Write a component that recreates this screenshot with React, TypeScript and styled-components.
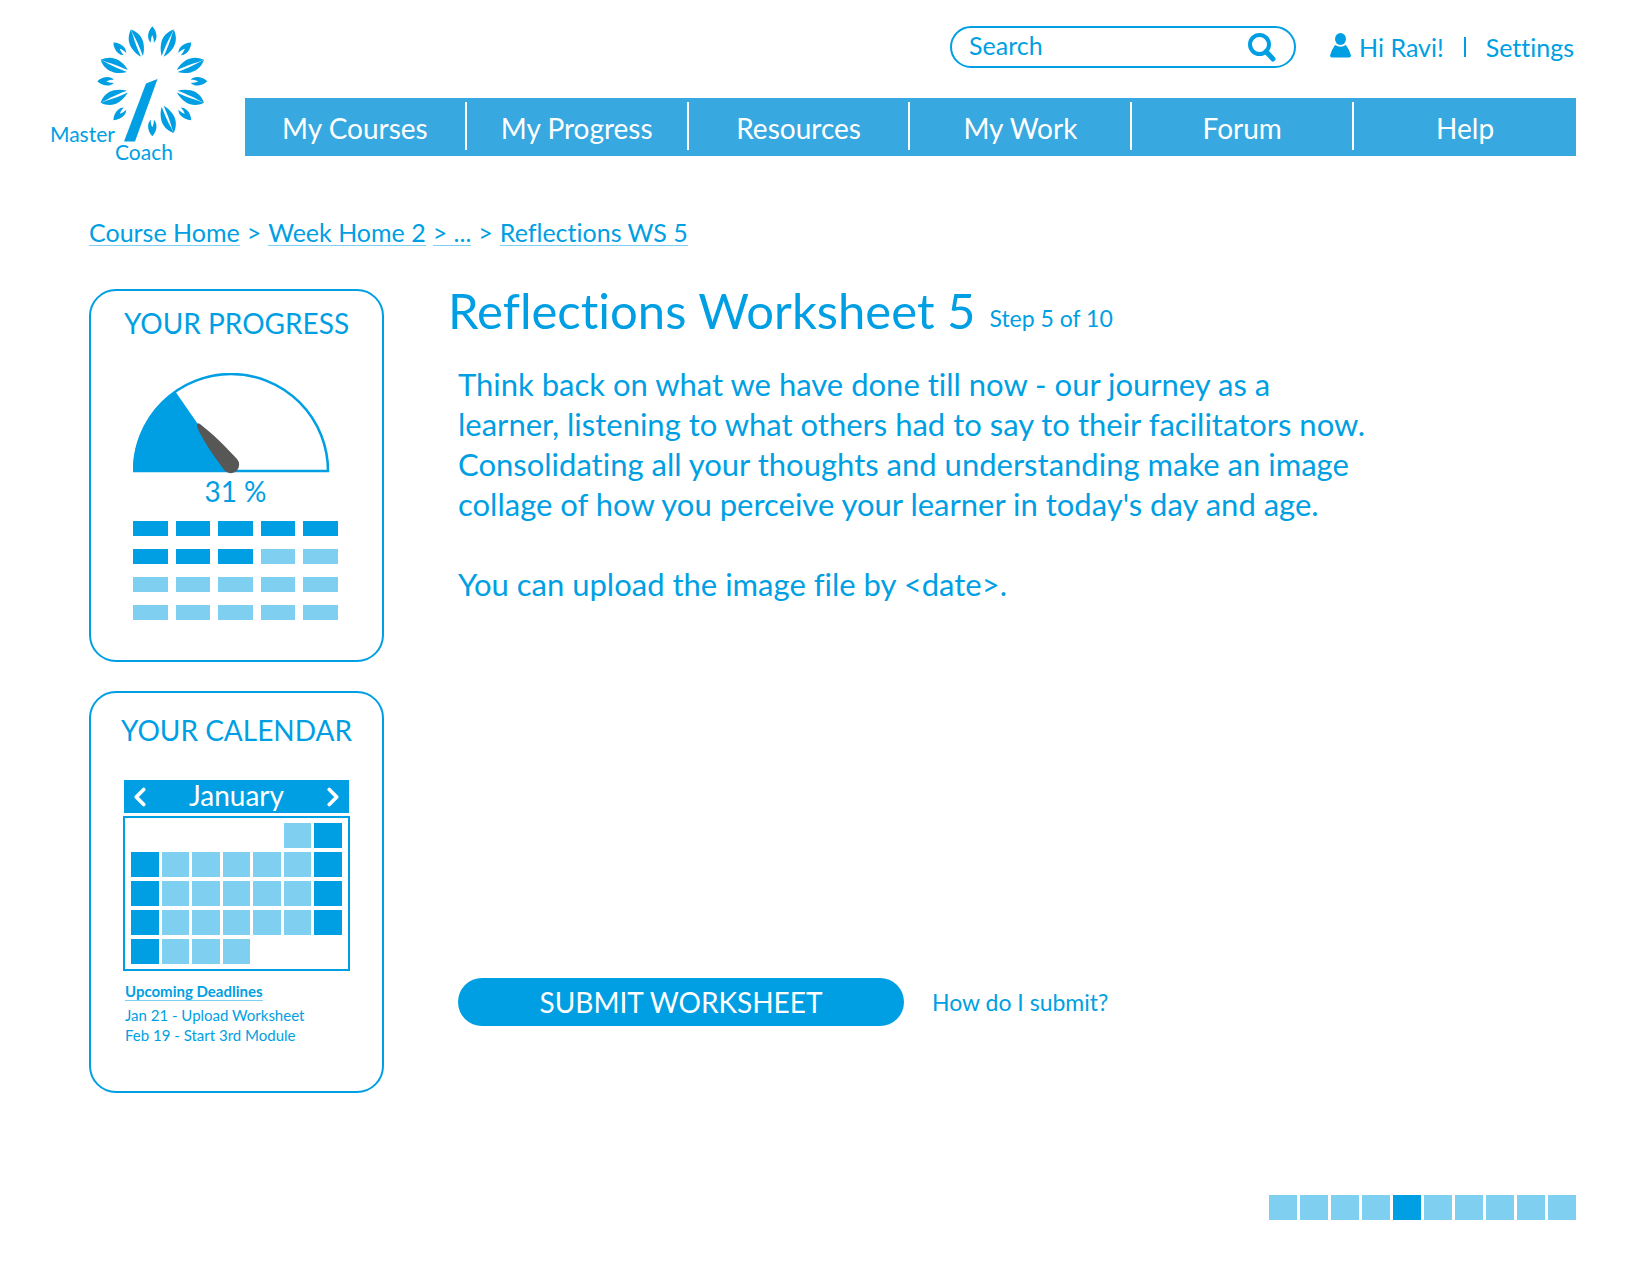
import React from "react";
import styled, { createGlobalStyle } from "styled-components";
import { ChevronLeft, ChevronRight } from "lucide-react";

const blue = "#009fe3";
const pale = "#7fcff0";
const navBlue = "#38a8e0";

const GlobalStyle = createGlobalStyle`
  * { box-sizing: border-box; }
  body {
    margin: 0;
    background: #fff;
    color: ${blue};
    font-family: Lato, "Noto Sans", sans-serif;
    font-variant-ligatures: none;
  }
  h1, h2, h3, p, ul, ol { margin: 0; padding: 0; font-weight: 400; }
  ul, ol { list-style: none; }
  a { color: inherit; text-decoration: none; }
  button, input { font: inherit; color: inherit; }
  button { border: 0; padding: 0; background: none; cursor: pointer; }
`;

const Page = styled.div`
  padding: 24px 74px 56px 48px;
`;

const Header = styled.header`
  display: flex;
  align-items: flex-start;
  gap: 37px;
`;

const LogoLink = styled.a`
  flex: none;
  display: block;
  svg { display: block; }
  text { font-size: 21px; fill: ${blue}; }
`;

const HeaderMain = styled.div`
  flex: 1;
  padding-top: 2px;
`;

const Toolbar = styled.div`
  display: flex;
  justify-content: flex-end;
  align-items: center;
  gap: 34px;
  margin-bottom: 30px;
  padding-right: 2px;
`;

const SearchForm = styled.form`
  display: flex;
  align-items: center;
  width: 346px;
  height: 42px;
  padding: 0 17px;
  border: 2px solid ${blue};
  border-radius: 21px;
`;

const SearchInput = styled.input`
  flex: 1;
  min-width: 0;
  padding: 0 0 4px;
  border: 0;
  outline: 0;
  background: none;
  font-size: 25px;
  &::placeholder { color: ${blue}; opacity: 1; }
`;

const IconButton = styled.button`
  display: flex;
`;

const Account = styled.div`
  display: flex;
  align-items: center;
  gap: 20px;
  font-size: 25px;
  line-height: 40px;
`;

const UserName = styled.a`
  display: flex;
  align-items: center;
  gap: 8px;
`;

const Divider = styled.span`
  width: 2px;
  height: 20px;
  background: ${blue};
`;

const Nav = styled.nav`
  display: grid;
  grid-template-columns: repeat(6, 1fr);
  height: 58px;
  padding: 4px 0 6px;
  background: ${navBlue};
`;

const NavItem = styled.a`
  display: flex;
  align-items: center;
  justify-content: center;
  padding-top: 4px;
  color: #fff;
  font-size: 28px;
  &:not(:last-child) { border-right: 2px solid #fff; }
`;

const Content = styled.div`
  padding-left: 41px;
`;

const Breadcrumb = styled.nav`
  display: flex;
  gap: 7px;
  margin-top: 55px;
  font-size: 25px;
  line-height: 26px;
`;

const Crumb = styled.a`
  border-bottom: 1px solid ${pale};
`;

const Columns = styled.div`
  display: grid;
  grid-template-columns: 295px 1fr;
  gap: 60px;
  margin-top: 43px;
`;

const Sidebar = styled.aside`
  display: flex;
  flex-direction: column;
  gap: 29px;
`;

const Card = styled.section<{ $top: number; $bottom: number }>`
  padding: ${(p) => p.$top}px 32px ${(p) => p.$bottom}px;
  border: 2px solid ${blue};
  border-radius: 27px;
`;

const CardTitle = styled.h2`
  margin: 0 -10px;
  font-size: 28px;
  line-height: 40px;
  text-align: center;
  white-space: nowrap;
`;

const Gauge = styled.figure`
  margin: 30px 12px 0 10px;
  text-align: center;
  svg { display: block; }
  figcaption { font-size: 28px; line-height: 34px; }
`;

const ModuleGrid = styled.div`
  display: grid;
  grid-template-columns: repeat(5, 1fr);
  gap: 13px 8px;
  margin: 13px 12px 0 10px;
`;

const Module = styled.span<{ $on: boolean }>`
  height: 15px;
  background: ${(p) => (p.$on ? blue : pale)};
`;

const MonthBar = styled.div`
  display: flex;
  align-items: center;
  justify-content: space-between;
  height: 33px;
  margin: 30px 1px 3px;
  padding: 0 1px;
  background: ${blue};
  color: #fff;
  h3 { font-size: 28px; line-height: 30px; padding-bottom: 3px; }
`;

const Calendar = styled.div`
  display: grid;
  grid-template-columns: repeat(7, 1fr);
  gap: 4px 3px;
  padding: 5px 6px;
  border: 2px solid ${blue};
`;

const Day = styled.span<{ $kind: string }>`
  height: 25px;
  background: ${(p) => (p.$kind === "#" ? blue : p.$kind === "+" ? pale : "transparent")};
`;

const Deadlines = styled.div`
  margin: 11px 2px 0;
  font-size: 15px;
  line-height: 20px;
  white-space: nowrap;
  h3 {
    display: table;
    margin-bottom: 4px;
    border-bottom: 1px solid ${pale};
    font-size: 15px;
    font-weight: 700;
    line-height: 18px;
  }
`;

const Main = styled.main`
  display: flex;
  flex-direction: column;
  padding-bottom: 67px;
`;

const TitleRow = styled.div`
  display: flex;
  align-items: flex-end;
  gap: 14px;
  margin-top: -9px;
  padding-left: 4px;
  h1 { font-size: 49px; line-height: 60px; }
`;

const Step = styled.span`
  font-size: 23px;
  line-height: 44px;
`;

const Brief = styled.div`
  display: grid;
  gap: 40px;
  margin-top: 24px;
  padding-left: 14px;
  font-size: 31px;
  line-height: 40px;
`;

const Actions = styled.div`
  display: flex;
  align-items: center;
  gap: 28px;
  margin-top: auto;
  padding-left: 14px;
`;

const SubmitButton = styled.button`
  width: 446px;
  height: 48px;
  border-radius: 24px;
  background: ${blue};
  color: #fff;
  font-size: 28px;
`;

const HelpLink = styled.a`
  font-size: 23px;
`;

const Steps = styled.ol`
  display: flex;
  justify-content: flex-end;
  gap: 3px;
  margin-top: 102px;
`;

const StepBox = styled.li<{ $current: boolean }>`
  width: 28px;
  height: 25px;
  background: ${(p) => (p.$current ? blue : pale)};
`;

const eighths = [0, 45, 90, 135, 180, 225, 270, 315];

function Logo() {
  return (
    <svg width="160" height="140" viewBox="48 24 160 140" role="img" aria-label="Master Coach">
      <g transform="translate(152.300 81.300)" fill={blue}>
        {eighths.map((a) => (
          <path
            key={a}
            transform={`rotate(${a})`}
            d="M0 -55 C3 -52 4.200 -48 4.200 -45 C4.200 -42 3 -40 1.600 -38.500 C1.600 -42 1 -44 0 -46 C-1 -44 -1.600 -42 -1.600 -38.500 C-3 -40 -4.200 -42 -4.200 -45 C-4.200 -48 -3 -52 0 -55Z"
          />
        ))}
        {eighths
          .filter((a) => a !== 180)
          .map((a) => (
            <g key={a} transform={`rotate(${a + 22.5})`}>
              <path d="M0 -56 C5.500 -51 7.500 -45 6.500 -39 C5.500 -34 3.500 -30 1 -27 C1.400 -35 1.200 -43 0.300 -50Z" />
              <path d="M0 -56 C-5.500 -51 -7.500 -45 -6.500 -39 C-5.500 -34 -3.500 -30 -1 -27 C-1.400 -35 -1.200 -43 -0.300 -50Z" />
            </g>
          ))}
      </g>
      <path d="M146 83.500 L157.500 79 L135 141.500 H124Z" fill={blue} />
      <text x="50" y="142">Master</text>
      <text x="115" y="160">Coach</text>
    </svg>
  );
}

function SearchIcon() {
  return (
    <svg width="30" height="30" viewBox="0 0 30 30" fill="none" stroke={blue} aria-hidden="true">
      <circle cx="12.500" cy="12.500" r="9.500" strokeWidth="4" />
      <path d="M19 19.500 L26 27" strokeWidth="5" strokeLinecap="round" />
    </svg>
  );
}

function UserIcon() {
  return (
    <svg width="21" height="28" viewBox="0 0 21 28" fill={blue} aria-hidden="true">
      <ellipse cx="10.500" cy="6" rx="5.500" ry="6" />
      <path d="M5 12 Q10.500 15.500 16 12 Q19 16 21 22.500 Q21 24.500 19 24.500 H2 Q0 24.500 0 22.500 Q2 16 5 12Z" />
    </svg>
  );
}

function GaugeDial() {
  return (
    <svg width="198" height="101" viewBox="0 0 198 101" aria-hidden="true">
      <path d="M1 98 A97 97 0 0 1 195 98 Z" fill="#fff" stroke={blue} strokeWidth="2.500" />
      <path d="M0 99 A98 98 0 0 1 42 18 L98 99Z" fill={blue} />
      <path
        d="M64 52 Q64 49 67 51 C80 61 93 74 104 86 A8.500 8.500 0 0 1 92 98 C82 85 69 66 64 54Z"
        fill="#575756"
      />
    </svg>
  );
}

const navItems = ["My Courses", "My Progress", "Resources", "My Work", "Forum", "Help"];
const calendarRows = ["     +#", "#+++++#", "#+++++#", "#+++++#", "#+++   "];

export default function App() {
  return (
    <>
      <GlobalStyle />
      <Page>
        <Header>
          <LogoLink href="#"><Logo /></LogoLink>
          <HeaderMain>
            <Toolbar>
              <SearchForm role="search" onSubmit={(e: React.FormEvent) => e.preventDefault()}>
                <SearchInput type="search" placeholder="Search" aria-label="Search" />
                <IconButton type="submit" aria-label="Search"><SearchIcon /></IconButton>
              </SearchForm>
              <Account>
                <UserName href="#"><UserIcon />Hi Ravi!</UserName>
                <Divider />
                <a href="#">Settings</a>
              </Account>
            </Toolbar>
            <Nav aria-label="Main">
              {navItems.map((item) => (
                <NavItem key={item} href="#">{item}</NavItem>
              ))}
            </Nav>
          </HeaderMain>
        </Header>

        <Content>
          <Breadcrumb aria-label="Breadcrumb">
            <Crumb href="#">Course Home</Crumb>
            <span>&gt;</span>
            <Crumb href="#">Week Home 2</Crumb>
            <Crumb href="#">&gt; ...</Crumb>
            <span>&gt;</span>
            <Crumb href="#">Reflections WS 5</Crumb>
          </Breadcrumb>

          <Columns>
            <Sidebar>
              <Card $top={12} $bottom={40}>
                <CardTitle>YOUR PROGRESS</CardTitle>
                <Gauge>
                  <GaugeDial />
                  <figcaption>31 %</figcaption>
                </Gauge>
                <ModuleGrid>
                  {Array.from({ length: 20 }, (_, i) => (
                    <Module key={i} $on={i < 8} />
                  ))}
                </ModuleGrid>
              </Card>

              <Card $top={17} $bottom={46}>
                <CardTitle>YOUR CALENDAR</CardTitle>
                <MonthBar>
                  <IconButton type="button" aria-label="Previous month">
                    <ChevronLeft size={30} strokeWidth={3} />
                  </IconButton>
                  <h3>January</h3>
                  <IconButton type="button" aria-label="Next month">
                    <ChevronRight size={30} strokeWidth={3} />
                  </IconButton>
                </MonthBar>
                <Calendar>
                  {calendarRows.join("").split("").map((kind, i) => (
                    <Day key={i} $kind={kind} />
                  ))}
                </Calendar>
                <Deadlines>
                  <h3>Upcoming Deadlines</h3>
                  <p>Jan 21 - Upload Worksheet</p>
                  <p>Feb 19 - Start 3rd Module</p>
                </Deadlines>
              </Card>
            </Sidebar>

            <Main>
              <TitleRow>
                <h1>Reflections Worksheet 5</h1>
                <Step>Step 5 of 10</Step>
              </TitleRow>
              <Brief>
                <p>
                  Think back on what we have done till now - our journey as a<br />
                  learner, listening to what others had to say to their facilitators now.<br />
                  Consolidating all your thoughts and understanding make an image<br />
                  collage of how you perceive your learner in today's day and age.
                </p>
                <p>You can upload the image file by &lt;date&gt;.</p>
              </Brief>
              <Actions>
                <SubmitButton type="button">SUBMIT WORKSHEET</SubmitButton>
                <HelpLink href="#">How do I submit?</HelpLink>
              </Actions>
            </Main>
          </Columns>

          <Steps aria-label="Step 5 of 10">
            {Array.from({ length: 10 }, (_, i) => (
              <StepBox key={i} $current={i === 4} />
            ))}
          </Steps>
        </Content>
      </Page>
    </>
  );
}
